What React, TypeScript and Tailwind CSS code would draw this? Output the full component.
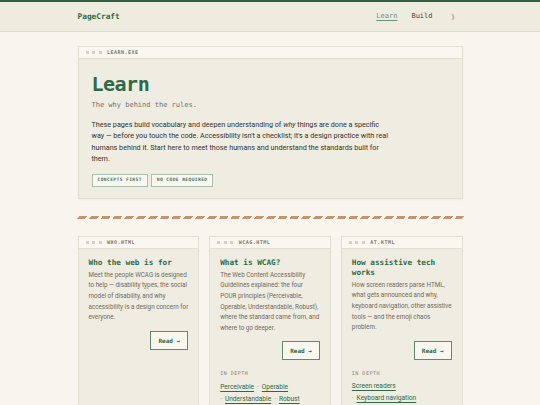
// ─────────────────────────────────────────────────────────────
// Data
// ─────────────────────────────────────────────────────────────

type Topic = {
  file: string;
  title: string;
  lines: string[];
  links?: string[];
};

// Líneas partidas igual que en el diseño
const topics: Topic[] = [
  {
    file: 'WHO.HTML',
    title: 'Who the web is for',
    lines: [
      'Meet the people WCAG is designed',
      'to help — disability types, the social',
      'model of disability, and why',
      'accessibility is a design concern for',
      'everyone.',
    ],
  },
  {
    file: 'WCAG.HTML',
    title: 'What is WCAG?',
    lines: [
      'The Web Content Accessibility',
      'Guidelines explained: the four',
      'POUR principles (Perceivable,',
      'Operable, Understandable, Robust),',
      'where the standard came from, and',
      'where to go deeper.',
    ],
    links: ['Perceivable', 'Operable', 'Understandable', 'Robust'],
  },
  {
    file: 'AT.HTML',
    title: 'How assistive tech works',
    lines: [
      'How screen readers parse HTML,',
      'what gets announced and why,',
      'keyboard navigation, other assistive',
      'tools — and the emoji chaos',
      'problem.',
    ],
    links: ['Screen readers', 'Keyboard navigation'],
  },
];

const mono = "font-['DejaVu_Sans_Mono','Liberation_Mono',monospace]";
const sans = "font-['Roboto','Liberation_Sans',sans-serif]";

// Media luna del toggle de tema
function MoonGlyph() {
  return (
    <svg viewBox="0 0 10 10" className="w-[8px] h-[8px]">
      <path d="M4 1 A4 4 0 0 1 4 9 A5.5 5.5 0 0 0 4 1 Z" fill="#d1b59c" />
    </svg>
  );
}

// Barra de título estilo ventana
function TitleBar({ label }: { label: string }) {
  return (
    <div className="flex items-center gap-[3.5px] h-[12px] px-[7px] bg-[#f9f7f0] border-b border-[#e2ded2]">
      <span className="w-[3px] h-[3px] bg-[#d6d2c8]" />
      <span className="w-[3px] h-[3px] bg-[#d6d2c8]" />
      <span className="w-[3px] h-[3px] bg-[#d6d2c8]" />
      <span className={`${mono} ml-[2px] text-[5px] font-bold tracking-[0.5px] text-[#7d786d] leading-none`}>
        {label}
      </span>
    </div>
  );
}

function TopicCard({ t }: { t: Topic }) {
  return (
    <div className="flex-1 min-w-0 border border-[#e2ded2] bg-[#efece1] shadow-[0_1px_1px_rgba(0,0,0,0.03)]">
      <TitleBar label={t.file} />
      <div className="px-[10px] pt-[9px] pb-[10px]">
        <h3 className={`${mono} text-[7.7px] font-bold leading-[10px] text-[#2e6a45]`}>{t.title}</h3>
        <p className={`${sans} mt-[2px] text-[6.3px] leading-[10.6px] text-[#6f6a60] whitespace-nowrap`}>
          {t.lines.map((l, i) => (
            <span key={i} className="block">{l}</span>
          ))}
        </p>
        <div className="flex justify-end mt-[8px]">
          <button className={`${mono} h-[19px] px-[7px] border border-[#5e8d6a] bg-[#f9f7f0] text-[6px] font-bold text-[#2e6a45]`}>
            Read →
          </button>
        </div>
        {t.links && (
          <div className="mt-[10px]">
            <div className={`${mono} text-[5px] tracking-[0.5px] text-[#8a857a]`}>IN DEPTH</div>
            <div className={`${sans} mt-[3px] flex flex-wrap text-[6.6px] leading-[12px]`}>
              {t.links.map((l, i) => (
                <span key={l} className="whitespace-nowrap mr-[3px]">
                  {i > 0 && <span className="text-[#8a857a] mr-[3px]">·</span>}
                  <span className="text-[#2e6a45] underline underline-offset-[1.5px]">{l}</span>
                </span>
              ))}
            </div>
          </div>
        )}
      </div>
    </div>
  );
}

export default function App() {
  return (
    <div className="min-h-[405px] bg-[#f8f5ee] bg-[radial-gradient(#ebe6da_0.6px,transparent_0.7px)] bg-[size:12px_12px]">
      {/* ── Cabecera ── */}
      <header className="border-t-[2px] border-[#2f5d3f] bg-[#eeebdf] border-b border-b-[#e0dcd0]">
        <div className="w-[385px] mx-auto h-[29px] flex items-center justify-between">
          <span className={`${mono} text-[7.8px] font-bold text-[#2e6a45]`}>PageCraft</span>
          <nav className={`${mono} flex items-center pr-[7px] text-[7px] text-[#4a4740]`}>
            <span className="text-[#6b9478] underline underline-offset-2">Learn</span>
            <span className="ml-[14px]">Build</span>
            <span className="ml-[15px] flex"><MoonGlyph /></span>
          </nav>
        </div>
      </header>

      <main className="w-[385px] mx-auto pt-[14px]">
        {/* ── Hero ── */}
        <section className="border border-[#e2ded2] bg-[#efece1] shadow-[0_1px_2px_rgba(0,0,0,0.04)]">
          <TitleBar label="LEARN.EXE" />
          <div className="px-[13px] pt-[13px] pb-[11px]">
            <h1 className={`${mono} text-[20px] font-bold leading-[24px] tracking-[-0.5px] text-[#2e6a45]`}>Learn</h1>
            <p className={`${mono} mt-[4px] text-[7px] text-[#77726a]`}>The why behind the rules.</p>
            <p className={`${sans} mt-[8px] max-w-[300px] text-[7.2px] leading-[11.6px] text-[#34322d]`}>
              These pages build vocabulary and deepen understanding of <i>why</i> things are done a specific way — before you touch the code. Accessibility isn't a checklist; it's a design practice with real humans behind it. Start here to meet those humans and understand the standards built for them.
            </p>
            <div className="flex gap-[3px] mt-[9px]">
              <span className={`${mono} h-[13px] px-[5px] flex items-center border border-[#a9bfae] bg-[#f9f7f0] text-[4.6px] font-bold tracking-[0.4px] text-[#4a7459]`}>
                CONCEPTS FIRST
              </span>
              <span className={`${mono} h-[13px] px-[5px] flex items-center border border-[#a9bfae] bg-[#f9f7f0] text-[4.6px] font-bold tracking-[0.4px] text-[#4a7459]`}>
                NO CODE REQUIRED
              </span>
            </div>
          </div>
        </section>

        {/* ── Separador rayado ── */}
        <div className="mt-[17px] h-[3px] -skew-x-[40deg] bg-[repeating-linear-gradient(90deg,#c4946f_0_8px,transparent_8px_11.8px)]" />

        {/* ── Tarjetas ── */}
        <div className="flex gap-[10px] mt-[17px]">
          {topics.map((t) => (
            <TopicCard key={t.file} t={t} />
          ))}
        </div>
      </main>
    </div>
  );
}
